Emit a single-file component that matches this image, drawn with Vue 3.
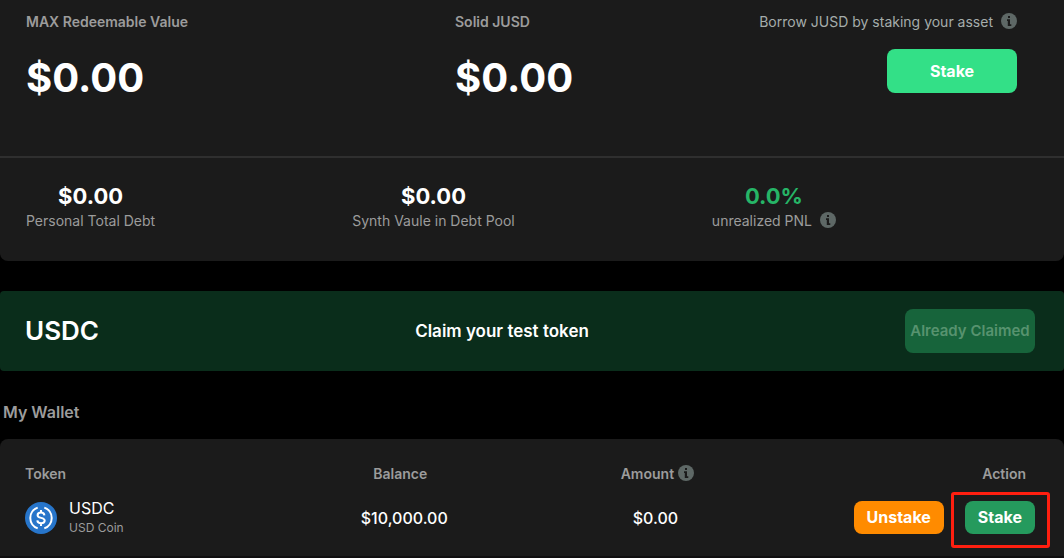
<script setup>
import { h } from 'vue'

const debtStats = [
  { value: '$0.00', label: 'Personal Total Debt' },
  { value: '$0.00', label: 'Synth Vaule in Debt Pool' },
  { value: '0.0%', label: 'unrealized PNL', positive: true, info: true },
]

const tokens = [
  { symbol: 'USDC', name: 'USD Coin', balance: '$10,000.00', amount: '$0.00' },
]

const InfoIcon = () =>
  h('svg', { width: 16, height: 16, viewBox: '0 0 16 16', 'aria-hidden': 'true' }, [
    h('circle', { cx: 8, cy: 8, r: 8, fill: '#5e6866' }),
    h('path', { d: 'M7 3h2v2H7zM6 6.3h3v5h1.3V13H6.8V8H6z', fill: '#1b1b1b' }),
  ])
</script>

<template>
  <main class="page">
    <section class="card">
      <div class="overview">
        <div>
          <h2 class="label strong">MAX Redeemable Value</h2>
          <p class="headline">$0.00</p>
        </div>
        <div>
          <h2 class="label strong">Solid JUSD</h2>
          <p class="headline">$0.00</p>
        </div>
        <div class="borrow">
          <p class="label hint">Borrow JUSD by staking your asset <InfoIcon class="info" /></p>
          <button type="button" class="btn large">Stake</button>
        </div>
      </div>
      <div class="stats">
        <div v-for="s in debtStats" :key="s.label" class="stat">
          <p class="stat-value" :class="{ positive: s.positive }">{{ s.value }}</p>
          <p class="label stat-label">{{ s.label }} <InfoIcon v-if="s.info" class="info" /></p>
        </div>
      </div>
    </section>

    <section class="claim">
      <h2 class="claim-token">USDC</h2>
      <p class="claim-text">Claim your test token</p>
      <button type="button" class="btn large claimed" disabled>Already Claimed</button>
    </section>

    <h2 class="wallet-title">My Wallet</h2>
    <section class="card wallet">
      <table>
        <colgroup>
          <col class="w-token" />
          <col class="w-balance" />
          <col class="w-amount" />
          <col />
        </colgroup>
        <thead>
          <tr>
            <th class="col-token">Token</th>
            <th class="col-balance">Balance</th>
            <th class="col-amount"><span class="th-inner">Amount <InfoIcon class="info" /></span></th>
            <th class="col-action">Action</th>
          </tr>
        </thead>
        <tbody>
          <tr v-for="t in tokens" :key="t.symbol">
            <td>
              <div class="token">
                <svg width="32" height="32" viewBox="0 0 32 32" aria-hidden="true">
                  <circle cx="16" cy="16" r="16" fill="#2775ca" />
                  <g fill="none" stroke="#fff" stroke-width="2">
                    <path d="M12.7 5.6a11 11 0 0 0 0 20.8M19.3 5.6a11 11 0 0 1 0 20.8" />
                    <path d="M19.4 13.3c-.2-1.800-1.500-2.700-3.400-2.700-2 0-3.400 1-3.400 2.600 0 3.800 7.100 1.500 7.100 5.400 0 1.700-1.500 2.700-3.600 2.700-2.200 0-3.600-1-3.800-2.900M16 8v3M16 21v3" />
                  </g>
                </svg>
                <div>
                  <div class="symbol">{{ t.symbol }}</div>
                  <div class="name">{{ t.name }}</div>
                </div>
              </div>
            </td>
            <td class="num">{{ t.balance }}</td>
            <td class="num">{{ t.amount }}</td>
            <td>
              <div class="actions">
                <button type="button" class="btn small unstake">Unstake</button>
                <span class="highlight"><button type="button" class="btn small stake">Stake</button></span>
              </div>
            </td>
          </tr>
        </tbody>
      </table>
    </section>
  </main>
</template>

<style>
body {
  margin: 0;
  background: #000;
}
</style>

<style scoped>
.page {
  font-family: Inter, "Liberation Sans", sans-serif;
  color: #fff;
  background: #000;
  overflow: hidden;
}
h2,
p {
  margin: 0;
}
.card {
  background: #1b1b1b;
  border-radius: 0 0 8px 8px;
}
.overview {
  display: grid;
  grid-template-columns: 429fr 273fr 289fr;
  padding: 12px 47px 52px 26px;
  border-bottom: 2px solid #2f2f2f;
}
.label {
  font-size: 14px;
  line-height: 20px;
  font-weight: 400;
  color: #9c9c9c;
}
.label.strong {
  font-weight: 600;
}
.headline {
  margin-top: 20px;
  font-size: 40px;
  line-height: 52px;
  font-weight: 700;
}
.borrow {
  display: flex;
  flex-direction: column;
  align-items: flex-end;
  gap: 17px;
}
.hint,
.stat-label {
  display: flex;
  align-items: center;
  gap: 8px;
  white-space: nowrap;
}
.hint {
  color: #a5adab;
}
.info {
  display: block;
  flex: none;
  margin-bottom: 2px;
}
.btn {
  border: 0;
  padding: 0;
  border-radius: 8px;
  font: 700 16px/20px Inter, "Liberation Sans", sans-serif;
  color: #fff;
  background: #33e087;
}
.large {
  width: 130px;
  height: 44px;
}
.stats {
  display: flex;
  justify-content: space-between;
  padding: 24px 228px 30px 26px;
}
.stat {
  display: flex;
  flex-direction: column;
  align-items: center;
}
.stat-value {
  font-size: 22px;
  line-height: 29px;
  font-weight: 700;
}
.positive {
  color: #26b567;
}
.claim {
  display: flex;
  justify-content: space-between;
  align-items: center;
  margin-top: 30px;
  padding: 18px 29px 18px 25px;
  background: #0a2d1b;
  border-radius: 4px;
}
.claim-token {
  font-size: 26px;
  line-height: 32px;
  font-weight: 600;
}
.claim-text {
  font-size: 17px;
  line-height: 24px;
  font-weight: 600;
}
.claimed {
  font-size: 15px;
  font-weight: 600;
  color: #57936f;
  background: #17643b;
}
.wallet-title {
  margin: 30px 0 16px 3px;
  font-size: 16px;
  line-height: 22px;
  font-weight: 600;
  color: #9c9c9c;
}
.wallet {
  padding: 25px 14px 0 25px;
  border-radius: 8px 8px 0 0;
  border-bottom: 2px solid #100f10;
}
table {
  width: 100%;
  table-layout: fixed;
  border-collapse: collapse;
}
th {
  padding: 0;
  font-size: 14px;
  line-height: 20px;
  font-weight: 600;
  color: #9c9c9c;
}
td {
  padding: 14px 0 18px;
}
.w-token {
  width: 24%;
}
.w-balance {
  width: 26%;
}
.w-amount {
  width: 23%;
}
.col-token {
  text-align: left;
}
.col-balance {
  padding-right: 8px;
}
.col-amount {
  padding-left: 4px;
}
.col-action {
  padding-right: 24px;
  text-align: right;
}
.th-inner {
  display: flex;
  justify-content: center;
  align-items: center;
  gap: 4px;
}
.token {
  display: flex;
  align-items: center;
  gap: 12px;
}
.symbol {
  font-size: 16px;
  line-height: 20px;
}
.name {
  font-size: 12px;
  line-height: 20px;
  color: #9c9c9c;
}
.num {
  text-align: center;
  font-size: 16px;
  font-weight: 500;
}
.actions {
  display: flex;
  justify-content: flex-end;
  align-items: center;
  gap: 21px;
  padding: 0 15px 2px 0;
}
.highlight {
  position: relative;
}
.highlight::after {
  content: "";
  position: absolute;
  inset: -9px -15px -14px -14px;
  border: 3px solid #ff1f10;
  border-radius: 3px;
  pointer-events: none;
}
.small {
  display: block;
  padding: 6px 13px 7px;
}
.unstake {
  background: #ff8b00;
}
.stake {
  background: #259a5d;
}
</style>
